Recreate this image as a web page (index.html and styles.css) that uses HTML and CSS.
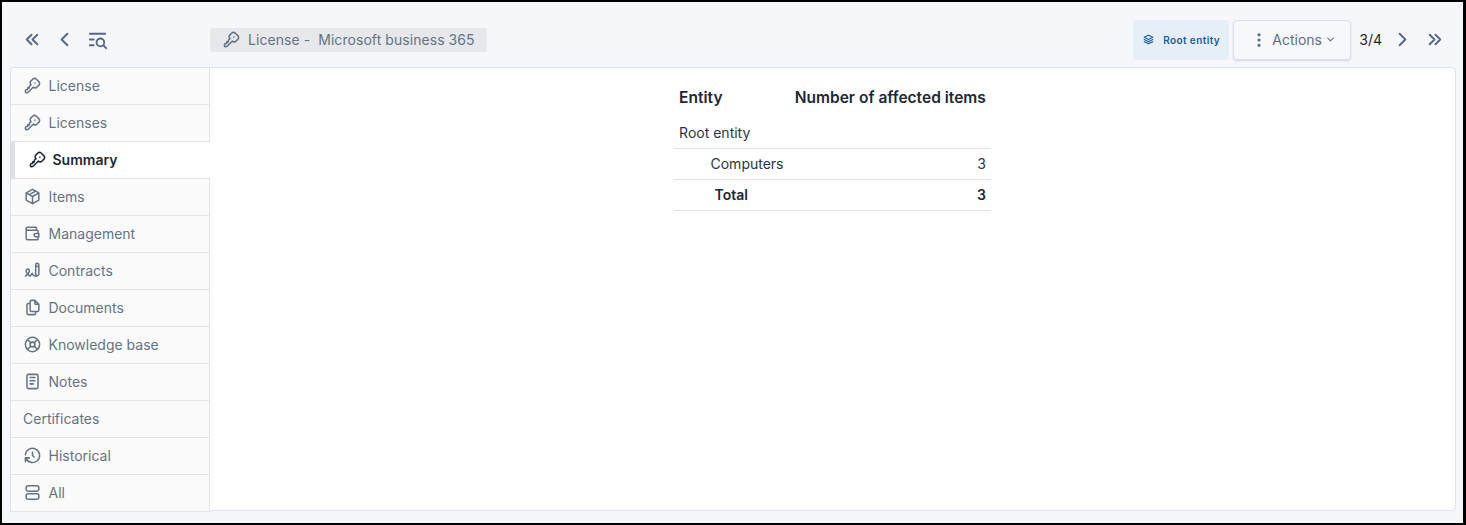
FILE: index.html
```html
<!DOCTYPE html>
<html>
  <head>
    <meta charset="utf-8">
    <title>License - Microsoft business 365</title>
    <link rel="stylesheet" href="styles.css">
  </head>
  <body>
    <svg class="sprite" xmlns="http://www.w3.org/2000/svg">
      <symbol id="i-first" viewBox="0 0 24 24"><path d="M11 7l-5 5l5 5M17 7l-5 5l5 5"/></symbol>
      <symbol id="i-prev" viewBox="0 0 24 24"><path d="M15 6l-6 6l6 6"/></symbol>
      <symbol id="i-next" viewBox="0 0 24 24"><path d="M9 6l6 6l-6 6"/></symbol>
      <symbol id="i-last" viewBox="0 0 24 24"><path d="M7 7l5 5l-5 5M13 7l5 5l-5 5"/></symbol>
      <symbol id="i-list" viewBox="0 0 24 24"><path d="M11 15a4 4 0 1 0 8 0a4 4 0 1 0 -8 0M18.5 18.5l2.5 2.5M4 6h16M4 12h4M4 18h4"/></symbol>
      <symbol id="i-key" viewBox="0 0 24 24"><path d="M16.555 3.843l3.602 3.602a2.877 2.877 0 0 1 0 4.069l-2.643 2.643a2.877 2.877 0 0 1 -4.069 0l-.301 -.301l-6.558 6.558a2 2 0 0 1 -1.239 .578l-.175 .008h-1.172a1 1 0 0 1 -.993 -.883l-.007 -.117v-1.172a2 2 0 0 1 .467 -1.284l.119 -.13l.414 -.414h2v-2h2v-2l2.144 -2.144l-.301 -.301a2.877 2.877 0 0 1 0 -4.069l2.643 -2.643a2.877 2.877 0 0 1 4.069 0zM15 9h.01"/></symbol>
      <symbol id="i-box" viewBox="0 0 24 24"><path d="M12 3l8 4.5l0 9l-8 4.5l-8 -4.5l0 -9l8 -4.5M12 12l8 -4.5M12 12l0 9M12 12l-8 -4.5M16 5.25l-8 4.5"/></symbol>
      <symbol id="i-wallet" viewBox="0 0 24 24"><path d="M17 8v-3a1 1 0 0 0 -1 -1h-10a2 2 0 0 0 0 4h12a1 1 0 0 1 1 1v3m0 4v3a1 1 0 0 1 -1 1h-12a2 2 0 0 1 -2 -2v-12M20 12v4h-4a2 2 0 0 1 0 -4h4"/></symbol>
      <symbol id="i-sign" viewBox="0 0 24 24"><path d="M3 19c3.333 -2 5 -4 5 -6c0 -3 -1 -3 -2 -3s-2.032 1.085 -2 3c.034 2.048 1.658 2.877 2.5 4c1.5 2 2.5 2.5 3.5 1c.667 -1 1.167 -1.833 1.5 -2.5c1 2.333 2.333 3.5 4 3.5h2.5M20 17v-12c0 -1.121 -.879 -2 -2 -2s-2 .879 -2 2v12l2 2l2 -2zM16 7h4"/></symbol>
      <symbol id="i-files" viewBox="0 0 24 24"><path d="M15 3v4a1 1 0 0 0 1 1h4M18 17h-7a2 2 0 0 1 -2 -2v-10a2 2 0 0 1 2 -2h4l5 5v7a2 2 0 0 1 -2 2zM16 17v2a2 2 0 0 1 -2 2h-7a2 2 0 0 1 -2 -2v-10a2 2 0 0 1 2 -2h2"/></symbol>
      <symbol id="i-buoy" viewBox="0 0 24 24"><path d="M9 12a3 3 0 1 0 6 0a3 3 0 1 0 -6 0M3 12a9 9 0 1 0 18 0a9 9 0 1 0 -18 0M15 15l3.35 3.35M9 15l-3.35 3.35M5.65 5.65l3.35 3.35M18.35 5.65l-3.35 3.35"/></symbol>
      <symbol id="i-notes" viewBox="0 0 24 24"><path d="M5 5a2 2 0 0 1 2 -2h10a2 2 0 0 1 2 2v14a2 2 0 0 1 -2 2h-10a2 2 0 0 1 -2 -2zM9 7l6 0M9 11l6 0M9 15l4 0"/></symbol>
      <symbol id="i-history" viewBox="0 0 24 24"><path d="M12 8l0 4l2 2M3.05 11a9 9 0 1 1 .5 4m-.5 5v-5h5"/></symbol>
      <symbol id="i-all" viewBox="0 0 24 24"><path d="M4 6a2.5 2.5 0 0 1 2.5 -2.5h11a2.5 2.5 0 0 1 2.5 2.5v2a2.5 2.5 0 0 1 -2.5 2.5h-11a2.5 2.5 0 0 1 -2.5 -2.5zM4 16a2.5 2.5 0 0 1 2.5 -2.5h11a2.5 2.5 0 0 1 2.5 2.5v2a2.5 2.5 0 0 1 -2.5 2.5h-11a2.5 2.5 0 0 1 -2.5 -2.5z"/></symbol>
      <symbol id="i-stack" viewBox="0 0 24 24"><path d="M12 4l-8 4l8 4l8 -4l-8 -4M4 12l8 4l8 -4M4 16l8 4l8 -4"/></symbol>
      <symbol id="i-dots" viewBox="0 0 24 24"><path d="M12 5h.01M12 12h.01M12 19h.01"/></symbol>
      <symbol id="i-down" viewBox="0 0 24 24"><path d="M6 9l6 6l6 -6"/></symbol>
    </svg>

    <div class="frame">
      <header class="topbar">
        <div class="pager">
          <svg class="icon nav-icon"><use href="#i-first"/></svg>
          <svg class="icon nav-icon"><use href="#i-prev"/></svg>
          <svg class="icon nav-icon"><use href="#i-list"/></svg>
        </div>
        <div class="crumb">
          <svg class="icon"><use href="#i-key"/></svg>
          <span>License -&nbsp; Microsoft business 365</span>
        </div>
        <div class="tools">
          <div class="entity-badge">
            <svg class="icon"><use href="#i-stack"/></svg>
            <span>Root entity</span>
          </div>
          <div class="actions">
            <svg class="icon dots"><use href="#i-dots"/></svg>
            <span>Actions</span>
            <svg class="icon caret"><use href="#i-down"/></svg>
          </div>
          <span class="position">3/4</span>
          <svg class="icon nav-icon"><use href="#i-next"/></svg>
          <svg class="icon nav-icon"><use href="#i-last"/></svg>
        </div>
      </header>

      <div class="main">
        <ul class="tabs">
          <li><svg class="icon"><use href="#i-key"/></svg>License</li>
          <li><svg class="icon"><use href="#i-key"/></svg>Licenses</li>
          <li class="active"><svg class="icon"><use href="#i-key"/></svg>Summary</li>
          <li><svg class="icon"><use href="#i-box"/></svg>Items</li>
          <li><svg class="icon"><use href="#i-wallet"/></svg>Management</li>
          <li><svg class="icon"><use href="#i-sign"/></svg>Contracts</li>
          <li><svg class="icon"><use href="#i-files"/></svg>Documents</li>
          <li><svg class="icon"><use href="#i-buoy"/></svg>Knowledge base</li>
          <li><svg class="icon"><use href="#i-notes"/></svg>Notes</li>
          <li class="plain">Certificates</li>
          <li><svg class="icon"><use href="#i-history"/></svg>Historical</li>
          <li><svg class="icon"><use href="#i-all"/></svg>All</li>
        </ul>

        <section class="panel">
          <table class="summary">
            <thead>
              <tr>
                <th class="left">Entity</th>
                <th class="right">Number of affected items</th>
              </tr>
            </thead>
            <tbody>
              <tr>
                <td colspan="2">Root entity</td>
              </tr>
              <tr>
                <td class="indent">Computers</td>
                <td class="right">3</td>
              </tr>
              <tr>
                <th>Total</th>
                <th class="right">3</th>
              </tr>
            </tbody>
          </table>
        </section>
      </div>
    </div>
  </body>
</html>
```

FILE: styles.css
```css
* {
  box-sizing: border-box;
}

html, body {
  margin: 0;
  height: 100%;
}

body {
  font-family: Inter, "Liberation Sans", sans-serif;
  font-size: 14px;
  color: #1d2738;
  background: #000;
  overflow: hidden;
}

.sprite {
  display: none;
}

.icon {
  width: 19px;
  height: 19px;
  flex: none;
  fill: none;
  stroke: currentColor;
  stroke-width: 1.9;
  stroke-linecap: round;
  stroke-linejoin: round;
}

.frame {
  height: 521px;
  margin: 2px 3px 2px 2px;
  background: #f5f7fb;
  display: flex;
  flex-direction: column;
}

.topbar {
  height: 65px;
  flex: none;
  display: flex;
  align-items: center;
  padding: 10px 17px 0 8px;
}

.pager {
  width: 200px;
  display: flex;
  align-items: center;
  gap: 9px;
  padding-left: 11px;
  color: #56678a;
}

.pager .nav-icon:last-child {
  margin-left: 1px;
}

.nav-icon,
.pager .nav-icon {
  width: 23px;
  height: 23px;
  stroke-width: 2;
}

.crumb {
  display: flex;
  align-items: center;
  gap: 7.5px;
  height: 24px;
  padding: 0 12px 0 11.5px;
  background: #e6e8ec;
  border-radius: 2px;
  color: #667382;
  letter-spacing: 0.06px;
}

.tools {
  margin-left: auto;
  display: flex;
  align-items: center;
  color: #56678a;
}

.entity-badge {
  display: flex;
  align-items: center;
  gap: 8px;
  width: 96px;
  height: 40px;
  padding-left: 9px;
  background: #e7eff6;
  border-radius: 4px;
  color: #1c5a9e;
  font-size: 10px;
  font-weight: 600;
  letter-spacing: 0.4px;
}

.entity-badge .icon {
  width: 13px;
  height: 13px;
}

.actions {
  display: flex;
  align-items: center;
  width: 118px;
  height: 40px;
  margin: 0 8px 0 4px;
  padding-left: 16px;
  background: #f6f8fb;
  border: 1px solid #dce1e7;
  border-radius: 4px;
  box-shadow: 0 1px 2px rgba(24, 36, 51, 0.14);
  color: #5f6e84;
}

.dots {
  width: 18px;
  height: 18px;
  margin-right: 4px;
  stroke-width: 4.2;
  color: #56678a;
}

.caret {
  width: 11px;
  height: 11px;
  margin-left: 3px;
  stroke-width: 2.2;
}

.position {
  color: #1d2738;
  margin-right: 8.5px;
}

.tools .nav-icon + .nav-icon {
  margin-left: 9.5px;
}

.main {
  flex: 1;
  display: flex;
  align-items: flex-start;
  padding: 0 7px 0 8px;
}

.tabs {
  width: 200px;
  flex: none;
  margin: 0;
  padding: 0;
  list-style: none;
  background: #fbfbfc;
  border: 1px solid #dfe3ea;
  border-right: none;
  border-radius: 4px 0 0 0;
  color: #667382;
  position: relative;
  z-index: 1;
}

.tabs li {
  display: flex;
  align-items: center;
  gap: 7px;
  height: 37px;
  padding: 0 0 2px 11.5px;
  border-bottom: 1px solid #dfe3ea;
  border-right: 1px solid #dfe3ea;
}

.tabs li.plain {
  padding-left: 12px;
}

.tabs li:last-child {
  height: 36px;
  border-bottom: none;
}

.tabs .active {
  gap: 6px;
  margin-left: -1px;
  padding-left: 12.5px;
  background: #fff;
  border-left: 5px solid #dce0e6;
  border-right: none;
  color: #1d2738;
  font-weight: 600;
}

.panel {
  flex: 1;
  height: 444px;
  margin-left: -1px;
  background: #fff;
  border: 1px solid #dfe3ea;
  border-radius: 0 4px 4px 0;
  display: flex;
  justify-content: center;
  align-items: flex-start;
}

.summary {
  border-collapse: collapse;
  margin-top: 8px;
}

.summary th,
.summary td {
  height: 31px;
  padding: 0 5.6px;
  border-bottom: 1px solid #dfe3ea;
  font-weight: 400;
  color: #2a3547;
}

.summary th {
  font-weight: 600;
  color: #1d2738;
}

.summary thead th {
  height: 41px;
  border-bottom: none;
  padding-top: 1px;
  font-size: 15.5px;
  letter-spacing: 0.02px;
}

.summary .left {
  text-align: left;
}

.summary .right {
  text-align: right;
}

.summary .indent {
  padding-left: 37px;
}
```
